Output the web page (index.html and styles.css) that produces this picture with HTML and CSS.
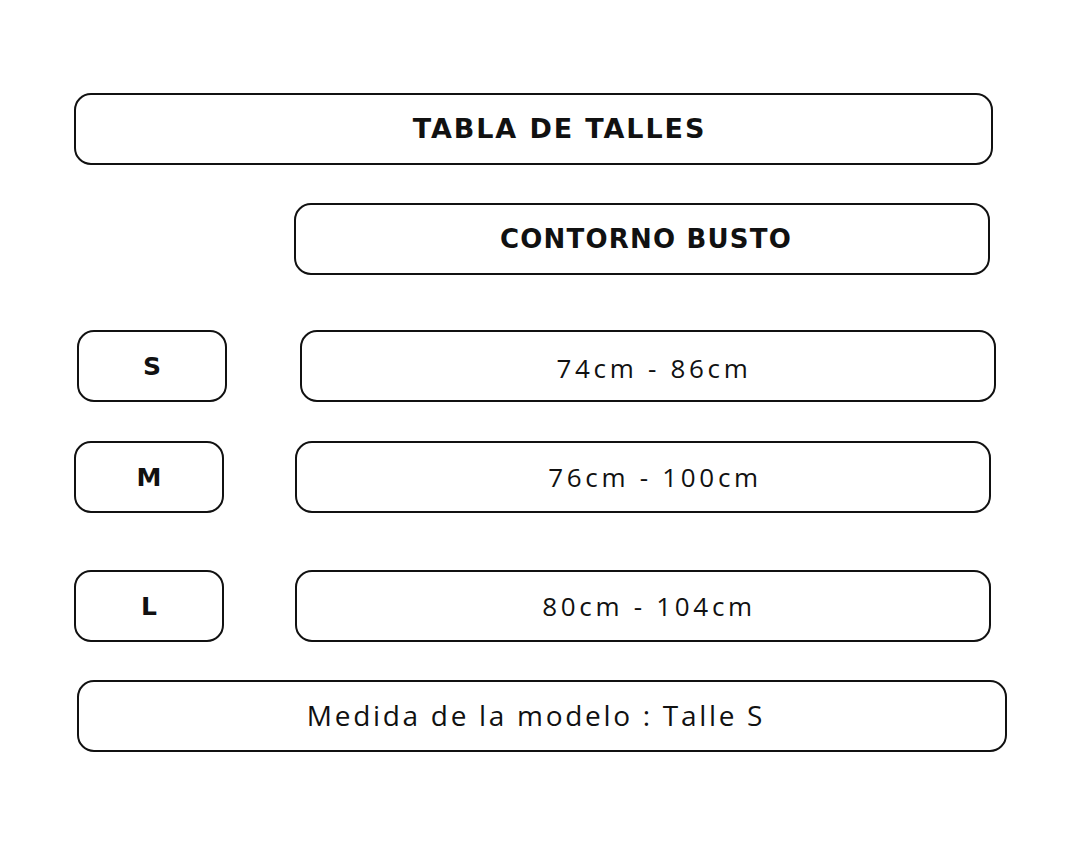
FILE: index.html
```html
<!DOCTYPE html>
<html lang="es">
<head>
<meta charset="utf-8">
<title>Tabla de talles</title>
<link rel="stylesheet" href="styles.css">
</head>
<body>
<main class="sheet">
  <div class="box title">TABLA DE TALLES</div>
  <div class="box head">CONTORNO BUSTO</div>
  <div class="row row-s">
    <div class="box size">S</div>
    <div class="box range">74cm - 86cm</div>
  </div>
  <div class="row row-m">
    <div class="box size">M</div>
    <div class="box range">76cm - 100cm</div>
  </div>
  <div class="row row-l">
    <div class="box size">L</div>
    <div class="box range">80cm - 104cm</div>
  </div>
  <div class="box model">Medida de la modelo : Talle S</div>
</main>
</body>
</html>
```
FILE: styles.css
```css
html, body {
  margin: 0;
  padding: 0;
  background: #fff;
}
body {
  width: 1080px;
  height: 864px;
  overflow: hidden;
  font-family: "Open Sans", "Liberation Sans", sans-serif;
  color: #111;
}
.sheet {
  display: flex;
  flex-direction: column;
  padding-top: 93px;
}
.box {
  box-sizing: border-box;
  height: 72px;
  border: 2px solid #111;
  border-radius: 17px;
  display: flex;
  align-items: center;
  justify-content: center;
}
.title {
  margin-left: 74px;
  width: 919px;
  font-family: "DejaVu Sans", "Open Sans", sans-serif;
  font-weight: 700;
  font-size: 27px;
  letter-spacing: 1.9px;
  padding-left: 52px;
  padding-bottom: 2px;
}
.head {
  margin-top: 38px;
  margin-left: 294px;
  width: 696px;
  font-family: "DejaVu Sans", "Open Sans", sans-serif;
  font-weight: 700;
  font-size: 26px;
  letter-spacing: 1.2px;
  padding-left: 8px;
}
.row {
  display: flex;
}
.row-s { margin-top: 55px; margin-left: 77px; gap: 73px; }
.row-m { margin-top: 39px; margin-left: 74px; gap: 71px; }
.row-l { margin-top: 57px; margin-left: 74px; gap: 71px; }
.size {
  width: 150px;
  font-family: "DejaVu Sans", "Open Sans", sans-serif;
  font-weight: 700;
  font-size: 25px;
  padding-top: 1px;
}
.range {
  width: 696px;
  font-size: 26px;
  letter-spacing: 3.7px;
  padding-left: 12px;
  padding-top: 3px;
}
.row-m .range { padding-top: 0; padding-left: 24px; }
.row-l .range { padding-left: 12px; padding-top: 0; }
.model {
  margin-top: 38px;
  margin-left: 77px;
  width: 930px;
  font-size: 28px;
  letter-spacing: 2.7px;
  padding-right: 12px;
  padding-bottom: 3px;
}
```
